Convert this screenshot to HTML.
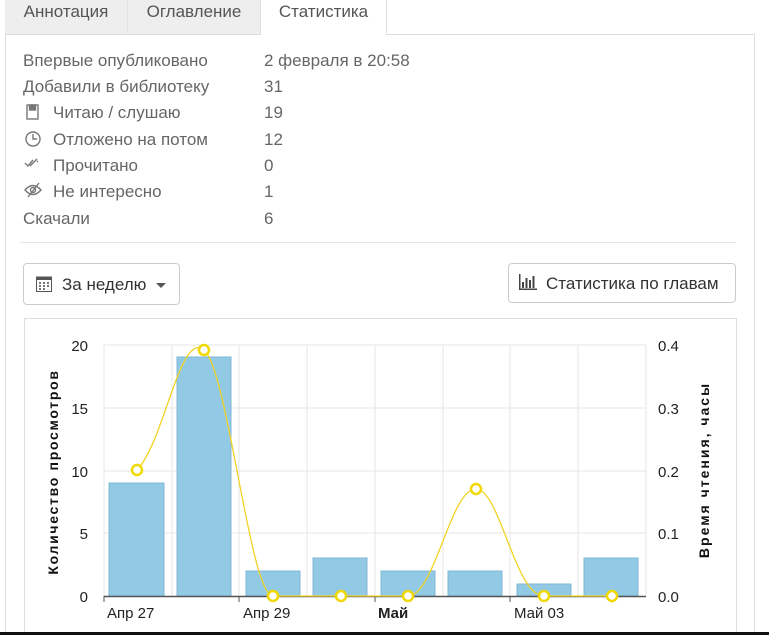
<!DOCTYPE html>
<html style="width:769px;height:635px;overflow:hidden"><head><meta charset="utf-8"><style>
body{margin:0;width:769px;height:635px;background:#fff;font-family:"Liberation Sans",sans-serif;color:#555;position:relative;overflow:hidden}
.a{position:absolute}
.tab{position:absolute;top:0;height:34px;line-height:24px;font-size:17px;color:#555;text-align:center}
.row{position:absolute;left:23px;font-size:17px;color:#666}
.v{position:absolute;left:264px;font-size:17px;color:#666}
</style></head><body>
<div class="tab" style="left:5px;width:122px;background:#eee;border-right:1px solid #e4e4e4">Аннотация</div>
<div class="tab" style="left:128px;width:132px;background:#eee">Оглавление</div>
<div class="a" style="left:5px;top:34px;width:748px;height:620px;border:1px solid #ddd"></div>
<div class="tab" style="left:260px;width:125px;height:35px;background:#fff;border:1px solid #ddd;border-top:none;border-bottom:none">Статистика</div>

<div class="row" style="top:51px">Впервые опубликовано</div><div class="v" style="top:51px">2 февраля в 20:58</div>
<div class="row" style="top:77px">Добавили в библиотеку</div><div class="v" style="top:77px">31</div>
<div class="row" style="top:103px;left:53px">Читаю / слушаю</div><div class="v" style="top:103px">19</div>
<div class="row" style="top:130px;left:53px">Отложено на потом</div><div class="v" style="top:130px">12</div>
<div class="row" style="top:156px;left:53px">Прочитано</div><div class="v" style="top:156px">0</div>
<div class="row" style="top:182px;left:53px">Не интересно</div><div class="v" style="top:182px">1</div>
<div class="row" style="top:209px">Скачали</div><div class="v" style="top:209px">6</div>
<svg class="a" style="left:24px;top:104px" width="24" height="100" viewBox="0 0 24 100" fill="none" stroke="#777" stroke-width="1.4">
<rect x="3" y="1" width="11" height="14"/><rect x="5.5" y="1" width="6" height="5" fill="#777"/>
<circle cx="9" cy="35" r="7"/><path d="M9 30v5h4"/>
<path d="M1 59l3 3 5-6M6 62l7-7M13 58l1-1" /><path d="M1 86q8-9 16 0q-8 9-16 0z M4 93l11-14"/><circle cx="9" cy="86" r="2.5"/>
</svg>
<div class="a" style="left:20px;top:242px;width:716px;height:1px;background:#e5e5e5"></div>

<div class="a" style="left:23px;top:263px;width:155px;height:40px;border:1px solid #ccc;border-radius:4px;font-size:17px;color:#333;line-height:40px">
<svg class="a" style="left:12px;top:11px" width="16" height="17" viewBox="0 0 16 17"><rect x="0.5" y="2" width="15" height="14.5" fill="none" stroke="#555"/><rect x="0.5" y="2" width="15" height="3" fill="#555"/><g fill="#777"><rect x="3" y="7" width="2" height="2"/><rect x="7" y="7" width="2" height="2"/><rect x="11" y="7" width="2" height="2"/><rect x="3" y="10" width="2" height="2"/><rect x="7" y="10" width="2" height="2"/><rect x="11" y="10" width="2" height="2"/><rect x="3" y="13" width="2" height="2"/><rect x="7" y="13" width="2" height="2"/></g></svg>
<span class="a" style="left:38px;top:1px">За неделю</span>
<span class="a" style="left:132px;top:19px;border:5px solid transparent;border-top:5px solid #555;border-bottom:none"></span></div>
<div class="a" style="left:508px;top:263px;width:226px;height:38px;border:1px solid #ccc;border-radius:4px;font-size:17px;color:#333;line-height:38px">
<svg class="a" style="left:10px;top:10px" width="18" height="16" viewBox="0 0 18 16" fill="#444"><rect x="0" y="0" width="1.5" height="16"/><rect x="0" y="14.5" width="18" height="1.5"/><rect x="3" y="8" width="2" height="6"/><rect x="6.5" y="4" width="2" height="10"/><rect x="10" y="6" width="2" height="8"/><rect x="13.5" y="2" width="2" height="12"/></svg>
<span class="a" style="left:37px;top:1px">Статистика по главам</span></div>

<div class="a" style="left:24px;top:318px;width:711px;height:330px;border:1px solid #ddd"></div>
<svg class="a" style="left:0;top:0" width="769" height="635" font-family="Liberation Sans,sans-serif">
<g stroke="#e6e6e6" stroke-width="1">
<line x1="104" y1="345" x2="646" y2="345"/><line x1="104" y1="408" x2="646" y2="408"/><line x1="104" y1="471" x2="646" y2="471"/><line x1="104" y1="533" x2="646" y2="533"/>
<line x1="104" y1="345" x2="104" y2="596"/><line x1="172" y1="345" x2="172" y2="596"/><line x1="239" y1="345" x2="239" y2="596"/><line x1="307" y1="345" x2="307" y2="596"/><line x1="375" y1="345" x2="375" y2="596"/><line x1="443" y1="345" x2="443" y2="596"/><line x1="510" y1="345" x2="510" y2="596"/><line x1="578" y1="345" x2="578" y2="596"/><line x1="646" y1="345" x2="646" y2="596"/>
</g>
<g fill="#92c9e5" stroke="#7fb7d6">
<rect x="109" y="483" width="55" height="113"/><rect x="177" y="357" width="54" height="239"/><rect x="246" y="571" width="54" height="25"/><rect x="313" y="558" width="54" height="38"/><rect x="381" y="571" width="54" height="25"/><rect x="448" y="571" width="54" height="25"/><rect x="517" y="584" width="54" height="12"/><rect x="584" y="558" width="54" height="38"/>
</g>
<line x1="104" y1="596.5" x2="646" y2="596.5" stroke="#555" stroke-width="1.5"/>
<g stroke="#555"><line x1="104" y1="596" x2="104" y2="602"/><line x1="239" y1="596" x2="239" y2="602"/><line x1="375" y1="596" x2="375" y2="602"/><line x1="510" y1="596" x2="510" y2="602"/></g>
<path d="M137 470C165 440 180 330 204 350C228 370 250 596 273 596C300 596 320 596 341 596C370 596 385 596 408 596C435 596 450 489 476 489C500 489 515 596 544 596C570 596 590 596 612 596" fill="none" stroke="#f2d325" stroke-width="1.3"/>
<g fill="#fff" stroke="#f0d800" stroke-width="2.5">
<circle cx="137" cy="470" r="5"/><circle cx="204" cy="350" r="5"/><circle cx="273" cy="596" r="5"/><circle cx="341" cy="596" r="5"/><circle cx="408" cy="596" r="5"/><circle cx="476" cy="489" r="5"/><circle cx="544" cy="596" r="5"/><circle cx="612" cy="596" r="5"/>
</g>
<g font-size="15" fill="#222" text-anchor="end">
<text x="88" y="351">20</text><text x="88" y="414">15</text><text x="88" y="477">10</text><text x="88" y="539">5</text><text x="88" y="602">0</text></g>
<g font-size="15" fill="#222">
<text x="658" y="351">0.4</text><text x="658" y="414">0.3</text><text x="658" y="477">0.2</text><text x="658" y="539">0.1</text><text x="658" y="602">0.0</text>
<text x="107" y="618">Апр 27</text><text x="243" y="618">Апр 29</text><text x="378" y="618" font-weight="bold">Май</text><text x="514" y="618">Май 03</text></g>
<text transform="translate(58,472) rotate(-90)" text-anchor="middle" font-size="14" font-weight="bold" fill="#111" letter-spacing="1.7">Количество просмотров</text>
<text transform="translate(709,470) rotate(-90)" text-anchor="middle" font-size="14" font-weight="bold" fill="#111" letter-spacing="2">Время чтения, часы</text>
</svg>
<div class="a" style="left:0;top:632px;width:769px;height:3px;background:#111"></div>
</body></html>
